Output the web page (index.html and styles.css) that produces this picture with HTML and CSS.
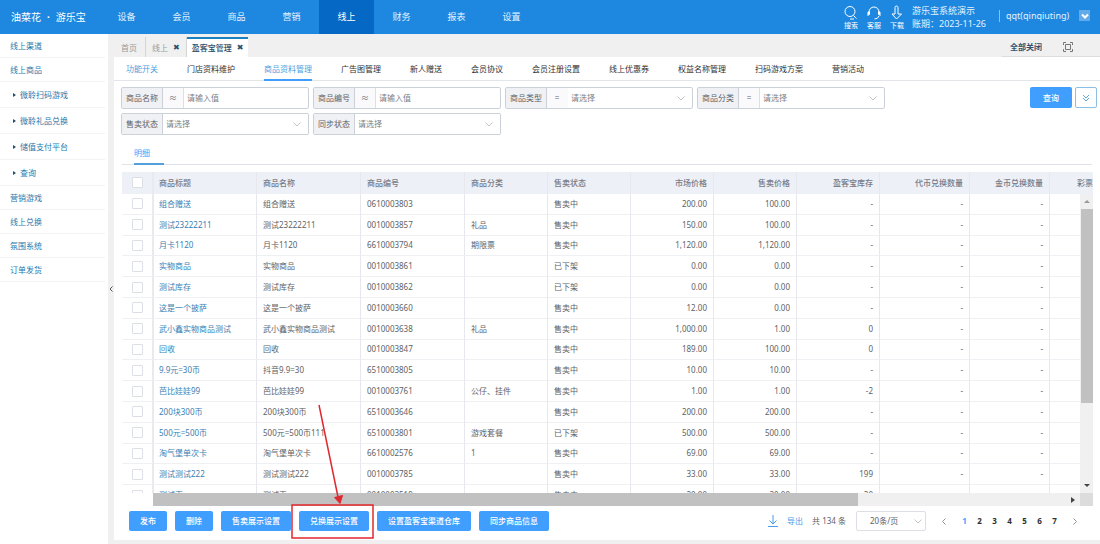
FILE: index.html
```html
<!DOCTYPE html>
<html lang="zh-CN">
<head>
<meta charset="utf-8">
<title>游乐宝 - 盈客宝管理</title>
<link rel="stylesheet" href="styles.css">
</head>
<body>
<header class="topbar">
  <div class="logo"><span>油菜花</span><b>·</b><span>游乐宝</span></div>
  <nav class="mainnav">
    <a href="#">设备</a><a href="#">会员</a><a href="#">商品</a><a href="#">营销</a><a href="#" class="active">线上</a><a href="#">财务</a><a href="#">报表</a><a href="#">设置</a>
  </nav>
  <div class="tools">
    <a href="#"><svg width="14" height="15" viewBox="0 0 14 15"><circle cx="6" cy="6.500" r="5"/><path d="M9.500 10.500l3 3M6 14h4"/></svg>搜索</a>
    <a href="#"><svg width="14" height="15" viewBox="0 0 14 15"><path d="M2 10V7a5 5 0 0 1 10 0v3M1 7v4M13 7v4M12 11q-1 3-4.500 3"/><path d="M2 6.500v3M12 6.500v3" stroke-width="2"/></svg>客服</a>
    <a href="#"><svg width="14" height="15" viewBox="0 0 14 15"><path d="M5 9V2.500a1.500 1.500 0 0 1 3 0V9h3.500L6.500 14 2 9z"/></svg>下载</a>
  </div>
  <div class="account"><span>游乐宝系统演示</span><span>账期：2023-11-26</span></div>
  <div class="user">qqt(qinqiuting)</div>
  <button class="userbtn" aria-label="用户菜单"><svg width="8" height="8" viewBox="0 0 8 8"><path d="M1 2.500l3 3 3-3"/></svg></button>
</header>
<div class="body">
  <aside class="sidebar">
    <a href="#">线上渠道</a>
    <a href="#">线上商品</a>
    <a href="#" class="sub">微聆扫码游戏</a>
    <a href="#" class="sub">微聆礼品兑换</a>
    <a href="#" class="sub">储值支付平台</a>
    <a href="#" class="sub">查询</a>
    <a href="#">营销游戏</a>
    <a href="#">线上兑换</a>
    <a href="#">氛围系统</a>
    <a href="#">订单发货</a>
  </aside>
  <button class="collapse" aria-label="收起"><svg width="4" height="6" viewBox="0 0 4 6"><path d="M3.500.500L1 3l2.500 2.500"/></svg></button>
  <main class="main">
    <div class="pagetabs">
      <a href="#" class="ptab home">首页</a>
      <a href="#" class="ptab">线上 <i>✖</i></a>
      <a href="#" class="ptab active">盈客宝管理 <i>✖</i></a>
      <div class="tabtools">
        <button class="closeall">全部关闭</button>
        <button class="full" aria-label="全屏"><svg width="10" height="10" viewBox="0 0 10 10"><path d="M.500 3V.500H3M7 .500h2.500V3M9.500 7v2.500H7M3 9.500H.500V7M2.500 2.500h5v5h-5z"/></svg></button>
      </div>
    </div>
    <div class="content">
      <nav class="subtabs">
        <a href="#" class="blue">功能开关</a><a href="#">门店资料维护</a><a href="#" class="blue active">商品资料管理</a><a href="#">广告图管理</a><a href="#">新人赠送</a><a href="#">会员协议</a><a href="#">会员注册设置</a><a href="#">线上优惠券</a><a href="#">权益名称管理</a><a href="#">扫码游戏方案</a><a href="#">营销活动</a>
      </nav>
      <form class="filters">
        <div class="fields">
          <div class="field"><label for="f1">商品名称</label><span class="op">≈</span><input id="f1" type="text" placeholder="请输入值"></div>
          <div class="field"><label for="f2">商品编号</label><span class="op">≈</span><input id="f2" type="text" placeholder="请输入值"></div>
          <div class="field"><label for="f3">商品类型</label><span class="op plain">=</span><select id="f3"><option>请选择</option></select><svg class="chev" width="8" height="5" viewBox="0 0 8 5"><path d="M.500.500L4 4 7.500.500"/></svg></div>
          <div class="field"><label for="f4">商品分类</label><span class="op">=</span><select id="f4"><option>请选择</option></select><svg class="chev" width="8" height="5" viewBox="0 0 8 5"><path d="M.500.500L4 4 7.500.500"/></svg></div>
          <div class="field"><label for="f5">售卖状态</label><select id="f5"><option>请选择</option></select><svg class="chev" width="8" height="5" viewBox="0 0 8 5"><path d="M.500.500L4 4 7.500.500"/></svg></div>
          <div class="field"><label for="f6">同步状态</label><select id="f6"><option>请选择</option></select><svg class="chev" width="8" height="5" viewBox="0 0 8 5"><path d="M.500.500L4 4 7.500.500"/></svg></div>
        </div>
        <button type="button" class="btn query">查询</button>
        <button type="button" class="more" aria-label="展开"><svg width="8" height="8" viewBox="0 0 8 8"><path d="M1 1l3 3 3-3M1 4l3 3 3-3"/></svg></button>
      </form>
      <div class="detailtabs"><a href="#">明细</a></div>
      <div class="grid">
        <div class="viewport">
          <table>
            <colgroup><col class="c-check"><col class="c-title"><col class="c-name"><col class="c-name"><col class="c-mid"><col class="c-mid"><col class="c-mid"><col class="c-mid"><col class="c-mid"><col class="c-wide"><col class="c-gold"><col></colgroup>
            <thead><tr><th><input type="checkbox" aria-label="全选"></th><th>商品标题</th><th>商品名称</th><th>商品编号</th><th>商品分类</th><th>售卖状态</th><th>市场价格</th><th>售卖价格</th><th>盈客宝库存</th><th>代币兑换数量</th><th>金币兑换数量</th><th>彩票</th></tr></thead>
            <tbody id="rows"></tbody>
          </table>
          <div class="vscroll"><i class="up"></i><b></b><i class="down"></i></div>
        </div>
        <div class="hscroll"><div class="track"><b></b><i></i></div><span class="corner"></span></div>
      </div>
      <footer class="footer">
        <button class="btn">发布</button>
        <button class="btn">删除</button>
        <button class="btn">售卖展示设置</button>
        <div class="marked">
          <button class="btn">兑换展示设置</button>
          <svg class="callout" width="84" height="136" viewBox="0 0 84 136"><path d="M1 102h81v33H1zM28 2l19 92" fill="none" stroke="#e0282e" stroke-width="1.500"/><path d="M43.500 94.500l8-2-2.500 8z" fill="#e0282e" stroke="#e0282e"/></svg>
        </div>
        <button class="btn">设置盈客宝渠道仓库</button>
        <button class="btn">同步商品信息</button>
        <div class="pager">
          <a href="#" class="export"><svg width="10" height="12" viewBox="0 0 10 12"><path d="M5 0v9M1.500 5.500L5 9l3.500-3.500M0 11.500h10"/></svg>导出</a>
          <span class="total">共 134 条</span>
          <div class="size"><select aria-label="每页条数"><option>20条/页</option></select><svg class="chev" width="8" height="5" viewBox="0 0 8 5"><path d="M.500.500L4 4 7.500.500"/></svg></div>
          <button class="arrow" aria-label="上一页"><svg width="4" height="7" viewBox="0 0 4 7"><path d="M3.500.500l-3 3 3 3"/></svg></button>
          <div class="pages"><a href="#" class="active">1</a><a href="#">2</a><a href="#">3</a><a href="#">4</a><a href="#">5</a><a href="#">6</a><a href="#">7</a></div>
          <button class="arrow" aria-label="下一页"><svg width="4" height="7" viewBox="0 0 4 7"><path d="M.500.500l3 3-3 3"/></svg></button>
        </div>
      </footer>
    </div>
  </main>
</div>
<script src="rows.js"></script>
</body>
</html>
```
FILE: styles.css
```css
* { box-sizing: border-box; }
body {
  margin: 0;
  height: 100vh;
  display: flex;
  flex-direction: column;
  background: #f0f0f0;
  color: #606266;
  font: 8px/12px "Noto Sans", "Noto Sans CJK SC", sans-serif;
  overflow: hidden;
}
a { color: inherit; text-decoration: none; }
button, input, select { font: inherit; color: inherit; margin: 0; padding: 0; border: 0; background: none; border-radius: 0; }
svg { fill: none; stroke: currentColor; display: block; flex: none; }

.topbar { height: 34px; flex: none; display: flex; align-items: center; background: #1e88e0; color: #fff; padding-right: 10px; }
.logo { width: 99px; padding-left: 11px; font-size: 10px; white-space: nowrap; display: flex; gap: 6px; }
.mainnav { display: flex; flex: 1; align-self: stretch; font-size: 9px; color: #e4f2ff; }
.mainnav a { width: 55px; display: flex; align-items: center; justify-content: center; }
.mainnav .active { background: #0468c4; color: #fff; }
.tools { display: flex; gap: 9px; font-size: 7px; line-height: 9px; margin-right: 8px; }
.tools a { width: 14px; display: flex; flex-direction: column; align-items: center; gap: 1px; white-space: nowrap; }
.account { display: flex; flex-direction: column; font-size: 9px; line-height: 13px; width: 87px; color: #e4f2ff; }
.user { font-size: 9px; padding-left: 6px; border-left: 1px solid #8cc2f2; width: 80px; margin-bottom: 2px; color: #e4f2ff; }
.userbtn { width: 11px; height: 11px; background: #62aae8; display: flex; align-items: center; justify-content: center; margin-bottom: 3px; }
.userbtn svg { stroke-width: 2; }

.body { flex: 1; min-height: 0; display: flex; }
.sidebar { width: 108px; flex: none; background: #fff; color: #2878ac; }
.sidebar a { display: flex; align-items: center; height: 24px; padding-left: 10px; border-bottom: 1px solid #f3f3f3; margin-right: 3px; }
.sidebar .sub { height: 26px; padding-left: 13px; }
.sub::before { content: ""; border: 2px solid transparent; border-left: 3px solid #24506e; border-right: 0; margin-right: 4px; }
.collapse { width: 6px; flex: none; display: flex; align-items: center; justify-content: center; color: #555; }

.main { flex: 1; min-width: 0; display: flex; flex-direction: column; padding: 3px 0 4px; }
.pagetabs { height: 20px; flex: none; display: flex; color: #999; }
.ptab { display: flex; align-items: center; gap: 5px; padding: 2px 6px 0; border-right: 1px solid #d4d4d4; white-space: nowrap; }
.ptab.home { padding-left: 7px; padding-right: 8px; }
.ptab i { font: 8px/12px "DejaVu Sans", sans-serif; color: #29506e; }
.ptab.active { background: #fff; color: #29506e; border-right: 0; border-top: 2px solid #1b80bd; padding: 0 5px; font-weight: 500; }
.tabtools { margin-left: auto; width: 98px; display: flex; align-items: center; padding-left: 8px; gap: 21px; color: #35506b; border-bottom: 1px solid #ddd; }
.closeall { font-weight: 700; }
.full { color: #777; }

.content { flex: 1; min-height: 0; background: #fff; display: flex; flex-direction: column; }
.subtabs { height: 24px; flex: none; display: flex; gap: 29px; padding-left: 12px; border-bottom: 1px solid #e3e5e8; color: #303133; white-space: nowrap; }
.subtabs a { line-height: 23px; height: 24px; }
.subtabs .blue { color: #4a9fe0; }
.subtabs .active { border-bottom: 2px solid #409eff; }

.filters { display: flex; align-items: flex-start; padding: 6px 3px 0 7px; flex: none; }
.fields { flex: 1; display: flex; flex-wrap: wrap; gap: 4px; }
.field { width: 188px; height: 22px; display: flex; align-items: stretch; border: 1px solid #ccd0d8; border-radius: 2px; position: relative; }
.field label { width: 41px; background: #f0f1f4; border-right: 1px solid #ccd0d8; display: flex; align-items: center; justify-content: center; white-space: nowrap; }
.op { width: 21px; border-right: 1px solid #dcdfe6; background: #fafafc; display: flex; align-items: center; justify-content: center; }
.op.plain { border-right-color: transparent; }
.field input, .field select { flex: 1; min-width: 0; appearance: none; padding: 0 3px; color: #7c7f85; outline: 0; }
input::placeholder { color: #7c7f85; }
.chev { position: absolute; right: 7px; top: 8px; color: #c0c4cc; pointer-events: none; }
.btn { height: 20px; padding: 0 11px; border-radius: 2px; background: #409eff; color: #fff; white-space: nowrap; font-weight: 500; }
.query { width: 42px; height: 21px; margin-right: 3px; }
.more { width: 22px; height: 21px; border: 1px solid #8abfe8; border-radius: 2px; color: #5aa5e8; display: flex; align-items: center; justify-content: center; }

.detailtabs { margin: 8px 8px 7px 8px; height: 22px; flex: none; border-bottom: 1px solid #dfe2e8; padding-left: 12px; display: flex; color: #409eff; }
.detailtabs a { width: 30px; height: 22px; line-height: 20px; border-bottom: 2px solid #55a0dc; }

.grid { flex: 1; min-height: 0; display: flex; flex-direction: column; margin: 0 7px 0 8px; }
.viewport { flex: 1; min-height: 0; overflow: hidden; position: relative; }
table { width: 100%; height: 334px; table-layout: fixed; border-collapse: separate; border-spacing: 0; }
.c-check { width: 32px; } .c-title { width: 103px; } .c-name { width: 104px; } .c-mid { width: 83px; } .c-wide { width: 90px; } .c-gold { width: 80px; }
th, td { padding: 0 6px; height: 20px; text-align: left; font-weight: 400; white-space: nowrap; border-right: 1px solid #e6e8ed; border-bottom: 1px solid #eef0f3; line-height: 12px; }
th { height: 22px; background: #edf0f6; color: #777b88; font-weight: 500; border-bottom-color: #edf0f6; }
td:first-child, th:first-child { text-align: center; padding: 0; border-right: 2px solid #e8eaee; }
td:first-child + td, th:first-child + th { padding-left: 5px; }
td:nth-child(n+7), th:nth-child(n+7) { text-align: right; }
th:last-child, td:last-child { padding: 0; border-right: 0; }
td a { color: #3a80b4; }
input[type=checkbox] { appearance: none; width: 11px; height: 11px; border: 1px solid #dcdfe6; border-radius: 1px; background: #fff; display: block; margin: 0 auto; }

.vscroll { position: absolute; top: 22px; right: 0; bottom: 0; width: 13px; background: #f0f0f0; display: flex; flex-direction: column; align-items: center; }
.vscroll b { width: 12px; flex: 0 0 65%; background: #c1c1c1; }
.vscroll i { border: 3px solid transparent; }
.vscroll .up { border-bottom-color: #999; border-top: 0; margin: 6px 0; }
.vscroll .down { border-top-color: #444; border-bottom: 0; margin: auto 0 6px; }
.hscroll { height: 13px; flex: none; margin-left: 31px; display: flex; }
.track { flex: 1; background: #f0f0f0; display: flex; align-items: center; }
.track b { width: 76%; height: 13px; background: #c1c1c1; }
.track i { border: 3px solid transparent; border-left: 4px solid #444; border-right: 0; margin: 0 5px 0 auto; }
.corner { width: 13px; background: #dcdcdc; }

.footer { height: 34px; flex: none; display: flex; align-items: center; gap: 8px; padding: 0 22px 4px 15px; }
.marked { position: relative; display: flex; }
.callout { position: absolute; left: -8px; top: -108px; pointer-events: none; }
.pager { margin-left: auto; display: flex; align-items: center; }
.export { display: flex; align-items: center; gap: 9px; color: #4a9ae8; }
.total { margin: 0 10px 0 9px; }
.size { position: relative; width: 70px; height: 20px; border: 1px solid #dcdfe6; border-radius: 2px; margin-right: 15px; }
.size select { appearance: none; width: 100%; height: 100%; padding: 0 13px; }
.size .chev { top: 7px; right: 3px; }
.arrow { width: 6px; display: flex; justify-content: center; color: #909399; }
.pages { display: flex; margin: 0 10px; font-weight: 700; color: #303133; }
.pages a { width: 15px; text-align: center; }
.pages .active { color: #409eff; }
```
FILE: rows.js
```js
const data = [
  ["组合赠送", "组合赠送", "0610003803", "", "售卖中", "200.00", "100.00", "-"],
  ["测试23222211", "测试23222211", "0010003857", "礼品", "售卖中", "150.00", "100.00", "-"],
  ["月卡1120", "月卡1120", "6610003794", "期限票", "售卖中", "1,120.00", "1,120.00", "-"],
  ["实物商品", "实物商品", "0010003861", "", "已下架", "0.00", "0.00", "-"],
  ["测试库存", "测试库存", "0010003862", "", "已下架", "0.00", "0.00", "-"],
  ["这是一个披萨", "这是一个披萨", "0010003660", "", "售卖中", "12.00", "0.00", "-"],
  ["武小鑫实物商品测试", "武小鑫实物商品测试", "0010003638", "礼品", "售卖中", "1,000.00", "1.00", "0"],
  ["回收", "回收", "0010003847", "", "售卖中", "189.00", "100.00", "0"],
  ["9.9元=30币", "抖音9.9=30", "6510003805", "", "售卖中", "10.00", "10.00", "-"],
  ["芭比娃娃99", "芭比娃娃99", "0010003761", "公仔、挂件", "售卖中", "1.00", "1.00", "-2"],
  ["200块300币", "200块300币", "6510003646", "", "售卖中", "200.00", "200.00", "-"],
  ["500元=500币", "500元=500币111", "6510003801", "游戏套餐", "已下架", "500.00", "500.00", "-"],
  ["淘气堡单次卡", "淘气堡单次卡", "6610002576", "1", "售卖中", "69.00", "69.00", "-"],
  ["测试测试222", "测试测试222", "0010003785", "", "售卖中", "33.00", "33.00", "199"],
  ["测试币", "测试币", "0010003519", "", "售卖中", "20.00", "20.00", "20"]
];
document.getElementById("rows").innerHTML = data.map(function (r) {
  const cells = r.slice(1).concat(["-", "-", ""]).map(function (c) { return "<td>" + c + "</td>"; }).join("");
  return '<tr><td><input type="checkbox" aria-label="' + r[0] + '"></td><td><a href="#">' + r[0] + "</a></td>" + cells + "</tr>";
}).join("");
```
